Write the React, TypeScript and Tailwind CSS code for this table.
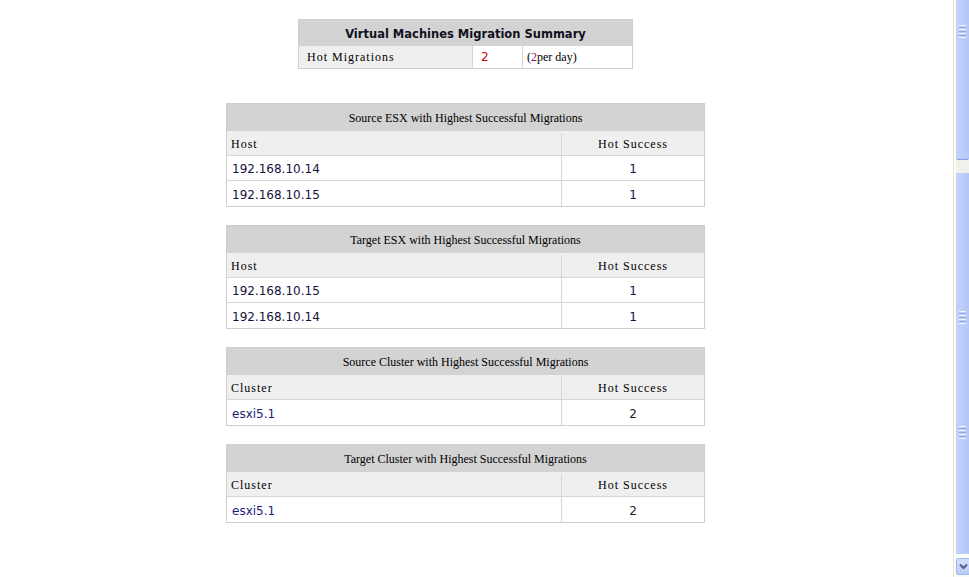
import React from "react";

const serif = { fontFamily: '"Liberation Serif", "Times New Roman", serif' };
const sans = { fontFamily: '"DejaVu Sans", Verdana, sans-serif' };

type Row = { name: string; value: string; nameColor: string; valueColor: string };

function MigTable({ title, col, rows }: { title: string; col: string; rows: Row[] }) {
  return (
    <div className="w-[479px] border border-[#cfcfcf] bg-white">
      <div
        className="h-[27px] bg-[#d3d3d3] flex items-center justify-center text-[12px] text-black"
        style={serif}
      >
        {title}
      </div>
      <div className="flex h-[25px] pt-[2px] bg-[#efefef] border-b border-[#d6d6d6] text-[12px] tracking-[1px] text-black" style={serif}>
        <div className="w-[335px] border-r border-[#d6d6d6] flex items-center pl-[4px]">{col}</div>
        <div className="flex-1 flex items-center justify-center">Hot Success</div>
      </div>
      {rows.map((r, i) => (
        <div
          key={i}
          className={`flex h-[25px] text-[12px] ${i < rows.length - 1 ? "border-b border-[#d6d6d6]" : ""}`}
          style={sans}
        >
          <div className="w-[335px] border-r border-[#d6d6d6] flex items-center pl-[5px] pt-[2px]" style={{ color: r.nameColor }}>
            {r.name}
          </div>
          <div className="flex-1 flex items-center justify-center pt-[2px]" style={{ color: r.valueColor }}>
            {r.value}
          </div>
        </div>
      ))}
    </div>
  );
}

function Grip() {
  return (
    <div className="flex flex-col gap-[1px] items-center">
      <div className="w-[7px] h-[1px] bg-[#f2f5fd]" />
      <div className="w-[7px] h-[1px] bg-[#8fa8e8]" />
      <div className="w-[7px] h-[1px] bg-[#f2f5fd]" />
      <div className="w-[7px] h-[1px] bg-[#8fa8e8]" />
      <div className="w-[7px] h-[1px] bg-[#f2f5fd]" />
      <div className="w-[7px] h-[1px] bg-[#8fa8e8]" />
      <div className="w-[7px] h-[1px] bg-[#f2f5fd]" />
    </div>
  );
}

function Scrollbar() {
  return (
    <div className="w-[16px] h-[577px] flex flex-col border-l border-[#ece6d8] bg-[#fbfbf8]">
      <div className="ml-[2px] w-[13px] h-[160px] bg-gradient-to-r from-[#c3d2fb] via-[#bccdf9] to-[#b3c6f6] rounded-b-[2px] border-b border-[#7f9ee6] flex flex-col items-center pt-[25px]">
        <Grip />
      </div>
      <div className="h-[13px] ml-[2px] w-[13px] bg-[#f1f1ec]" />
      <div className="ml-[2px] w-[13px] flex-1 bg-gradient-to-r from-[#c3d2fb] via-[#bccdf9] to-[#b3c6f6] flex flex-col items-center">
        <div className="h-[138px]" />
        <Grip />
        <div className="h-[102px]" />
        <Grip />
      </div>
      <div className="ml-[2px] w-[13px] h-[4px] bg-[#fbfbf8]" />
      <div className="ml-[2px] w-[14px] h-[17px] border border-[#9fb6ee] rounded-[2px] bg-gradient-to-b from-[#d5e0fd] to-[#b9cbf7] flex items-center justify-center">
        <svg width="9" height="7" viewBox="0 0 9 7">
          <path d="M1 1.5 L4.5 5 L8 1.5" stroke="#4d6185" strokeWidth="2" fill="none" />
        </svg>
      </div>
      <div className="h-[2px]" />
    </div>
  );
}

export default function App() {
  const dark = "#14143c";
  return (
    <div className="w-[969px] h-[577px] bg-white flex overflow-hidden">
      <div className="w-[931px] flex flex-col items-center pt-[19px]">
        <div className="w-[335px] border border-[#cfcfcf]">
          <div
            className="h-[26px] pt-[3px] bg-[#d3d3d3] flex items-center justify-center text-[11.5px] font-bold text-[#101020]"
            style={sans}
          >
            Virtual Machines Migration Summary
          </div>
          <div className="flex h-[22px] text-[12px]">
            <div
              className="w-[174px] bg-[#efefef] border-r border-[#d6d6d6] flex items-center pl-[8px] tracking-[1px] text-black"
              style={serif}
            >
              Hot Migrations
            </div>
            <div className="w-[50px] border-r border-[#d6d6d6] flex items-center pl-[8px] text-[#cc0000]" style={sans}>
              2
            </div>
            <div className="flex-1 flex items-center pl-[4px] text-black" style={serif}>
              (<span className="text-[#8a1060]">2</span>per day)
            </div>
          </div>
        </div>

        <div className="h-[34px]" />
        <div className="flex flex-col gap-[18px]">
          <MigTable
            title="Source ESX with Highest Successful Migrations"
            col="Host"
            rows={[
              { name: "192.168.10.14", value: "1", nameColor: dark, valueColor: "#10104a" },
              { name: "192.168.10.15", value: "1", nameColor: dark, valueColor: "#10104a" },
            ]}
          />
          <MigTable
            title="Target ESX with Highest Successful Migrations"
            col="Host"
            rows={[
              { name: "192.168.10.15", value: "1", nameColor: dark, valueColor: "#10104a" },
              { name: "192.168.10.14", value: "1", nameColor: dark, valueColor: "#10104a" },
            ]}
          />
          <MigTable
            title="Source Cluster with Highest Successful Migrations"
            col="Cluster"
            rows={[{ name: "esxi5.1", value: "2", nameColor: "#1e1e78", valueColor: "#1a1a30" }]}
          />
          <MigTable
            title="Target Cluster with Highest Successful Migrations"
            col="Cluster"
            rows={[{ name: "esxi5.1", value: "2", nameColor: "#1e1e78", valueColor: "#1a1a30" }]}
          />
        </div>
      </div>
      <div className="w-[22px]" />
      <Scrollbar />
    </div>
  );
}
